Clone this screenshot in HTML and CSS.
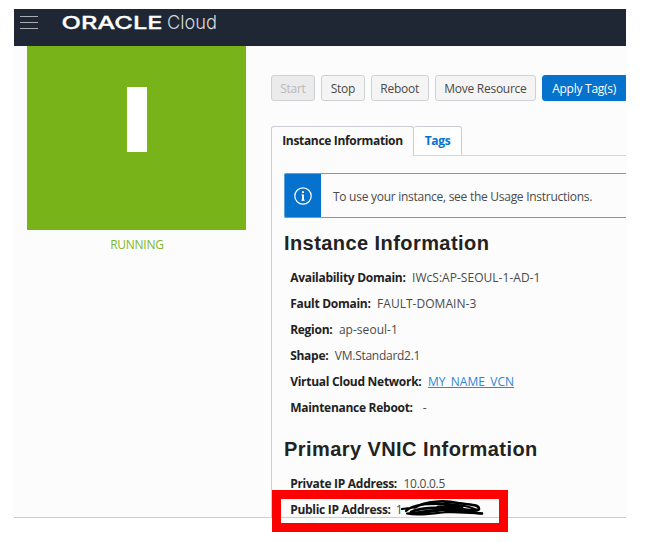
FILE: index.html
```html
<!DOCTYPE html>
<html lang="en">
<head>
<meta charset="utf-8">
<title>Oracle Cloud</title>
<link rel="stylesheet" href="styles.css">
</head>
<body>
<div class="app">
  <header class="topbar">
    <div class="menu"><span></span><span></span><span></span></div>
    <svg class="logo" width="160" height="24" viewBox="0 0 160 24">
      <text class="logo-brand" x="-0.500" y="19.500" textLength="101" lengthAdjust="spacingAndGlyphs">ORACLE</text>
      <text class="logo-product" x="105" y="19.500" textLength="50" lengthAdjust="spacingAndGlyphs">Cloud</text>
    </svg>
  </header>
  <div class="content">
    <aside class="status">
      <div class="tile"><div class="tile-bar"></div></div>
      <div class="state">RUNNING</div>
    </aside>
    <main class="main">
      <div class="actions">
        <button class="btn start" disabled>Start</button>
        <button class="btn stop">Stop</button>
        <button class="btn reboot">Reboot</button>
        <button class="btn move">Move Resource</button>
        <button class="btn apply">Apply Tag(s)</button>
      </div>
      <div class="tabs">
        <div class="tab active">Instance Information</div>
        <div class="tab other">Tags</div>
      </div>
      <section class="panel">
        <div class="notice">
          <div class="notice-icon">
            <svg width="18" height="18" viewBox="0 0 18 18" fill="none" stroke="#fff">
              <circle cx="9" cy="9" r="8.2" stroke-width="1.2"/>
              <path d="M9 7.5v6M9 4.2v1.8" stroke-width="1.9"/>
              <path d="M7.5 8h1.5M7.3 13.2h3.4" stroke-width="1"/>
            </svg>
          </div>
          <div class="notice-text">To use your instance, see the Usage Instructions.</div>
        </div>
        <h2>Instance Information</h2>
        <dl>
          <div class="row"><dt>Availability Domain:</dt><dd class="caps">IWcS:AP-SEOUL-1-AD-1</dd></div>
          <div class="row"><dt>Fault Domain:</dt><dd class="caps">FAULT-DOMAIN-3</dd></div>
          <div class="row"><dt>Region:</dt><dd class="caps">ap-seoul-1</dd></div>
          <div class="row"><dt>Shape:</dt><dd>VM.Standard2.1</dd></div>
          <div class="row"><dt>Virtual Cloud Network:</dt><dd class="caps"><a href="#">MY_NAME_VCN</a></dd></div>
          <div class="row"><dt>Maintenance Reboot:</dt><dd class="empty">-</dd></div>
        </dl>
        <h2 class="vnic">Primary VNIC Information</h2>
        <dl>
          <div class="row"><dt>Private IP Address:</dt><dd>10.0.0.5</dd></div>
          <div class="row"><dt>Public IP Address:</dt><dd class="hidden-ip">1</dd></div>
        </dl>
      </section>
    </main>
  </div>
  <div class="highlight"></div>
  <svg class="scribble" width="90" height="20" viewBox="0 0 90 20" fill="none" stroke="#000" stroke-linecap="round" stroke-linejoin="round">
    <path d="M15 8.500C26 2 44 1 58 4C70 6 79 5 79 10C78 13 65 10 52 9C38 8 18 9 11 13C8 17 29 12 44 11C55 10 65 13 82 14.500" stroke-width="2.6"/>
    <path d="M2 10L14 8.500M6 12C14 4 30 5 43 5C55 5 67 6 77 11C65 14 52 12 43 11C30 10 20 14 7 14.500C20 17 34 14 47 13L82 14.500" stroke-width="2.2"/>
    <path d="M38 8C46 7 50 9 58 10M40 10L55 10M45 5L62 8" stroke-width="3"/>
  </svg>
</div>
</body>
</html>
```
FILE: styles.css
```css
* { box-sizing: border-box; }
html { height: 542px; }
body {
  min-height: 542px;
  margin: 0;
  padding: 9px 0 0 14px;
  background: #fff;
  font-family: "Open Sans", "Noto Sans", sans-serif;
  font-size: 12px;
  letter-spacing: -.27px;
  color: #4a4a4a;
}
.app {
  position: relative;
  width: 612px;
  height: 509px;
  background: #fcfcfc;
  border-bottom: 1px solid #cdcdcf;
}
.topbar {
  display: flex;
  align-items: flex-start;
  height: 37px;
  background: #1e2733;
}
.menu {
  display: flex;
  flex-direction: column;
  gap: 5px;
  width: 18px;
  margin: 7px 24px 0 6px;
}
.menu span { height: 1px; background: #a9adb2; }
.logo { overflow: visible; letter-spacing: 0; }
.logo-brand { font: 500 17.5px Inter, sans-serif; fill: #fff; stroke: #fff; stroke-width: .3px; }
.logo-product { font: 300 18.5px Inter, sans-serif; fill: #d5d8dc; }
.content { display: flex; height: 471px; }
.status { width: 219px; margin-left: 13.4px; }
.tile { height: 184px; background: #78b31a; padding-top: 41px; }
.tile-bar { width: 20px; height: 65px; margin: 0 auto; background: #fff; }
.state {
  margin-top: 7px;
  line-height: 16px;
  text-align: center;
  color: #7db72a;
}
.main { flex: 1; margin-left: 24.6px; padding-top: 29px; min-width: 0; }
.actions { display: flex; gap: 6px; }
.btn {
  height: 26px;
  padding: 0;
  border: 1px solid #cdd0d5;
  border-radius: 3px;
  background: #f4f4f4;
  color: #4a4a4a;
  font: inherit;
  letter-spacing: inherit;
  white-space: nowrap;
}
.start { width: 44px; background: #ebebeb; color: #b9b9b9; }
.stop { width: 44px; }
.reboot { width: 58px; }
.move { width: 102px; }
.apply {
  width: 84px;
  border-color: #0572ce;
  border-radius: 3px 0 0 3px;
  background: #0572ce;
  color: #fff;
}
.tabs {
  display: flex;
  height: 30px;
  margin-top: 25px;
  border-bottom: 1px solid #d6d6d9;
}
.tab {
  height: 29px;
  border: 1px solid #cbcdd4;
  border-bottom: 0;
  border-radius: 3px 3px 0 0;
  line-height: 28px;
  font-weight: 700;
  letter-spacing: -.33px;
  text-align: center;
  white-space: nowrap;
}
.active { width: 143px; height: 30px; background: #fcfcfc; color: #222; }
.other { width: 48px; border-left: 0; color: #0572ce; background: #fff; }
.panel { height: 361px; border-left: 1px solid #cbcdcf; padding: 17px 0 0 12px; }
.notice {
  display: flex;
  height: 45px;
  border: 1px solid #5ba1dc;
  border-right: 0;
  border-radius: 2px 0 0 2px;
}
.notice-icon {
  display: flex;
  align-items: center;
  justify-content: center;
  width: 36px;
  background: #0572ce;
}
.notice-text { margin-left: 12px; line-height: 45px; white-space: nowrap; }
h2 {
  margin: 12px 0 0;
  font: 700 20px/26px "Liberation Sans", Arial, sans-serif;
  letter-spacing: .43px;
  color: #222;
}
dl { margin: 8.500px 0 0 6.200px; }
.row { display: flex; height: 26.1px; line-height: 26px; white-space: nowrap; }
dt { font-weight: 700; letter-spacing: -.28px; color: #222; }
dd { margin: 0 0 0 6.500px; }
.caps { letter-spacing: .03px; }
.empty { margin-left: 10px; }
.hidden-ip { margin-left: 5px; }
a { color: #2d87d5; }
.vnic { margin-top: 15px; }
.highlight {
  position: absolute;
  left: 258px;
  top: 481px;
  width: 236px;
  height: 42px;
  border: 9px solid #f00;
}
.scribble { position: absolute; left: 386px; top: 490px; }
```
